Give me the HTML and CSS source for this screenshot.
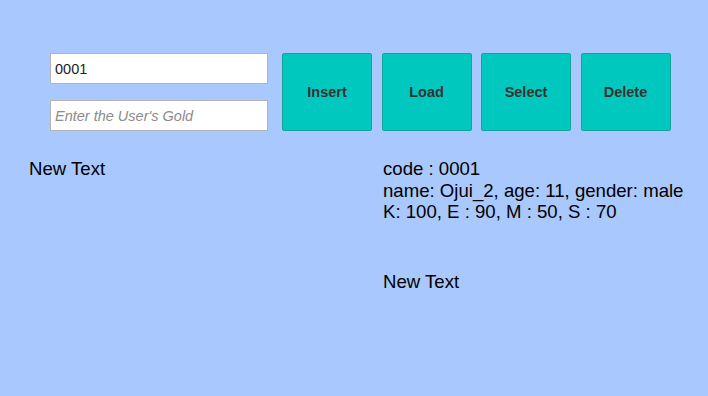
FILE: index.html
```html
<!DOCTYPE html>
<html lang="en">
<head>
  <meta charset="UTF-8" />
  <title>User DB</title>
  <link rel="stylesheet" href="styles.css">
</head>
<body>
  <div class="panel">
    <div class="controls">
      <div class="fields">
        <input type="text" class="field" value="0001">
        <input type="text" class="field" placeholder="Enter the User's Gold">
      </div>
      <div class="buttons">
        <button class="btn">Insert</button>
        <button class="btn">Load</button>
        <button class="btn">Select</button>
        <button class="btn">Delete</button>
      </div>
    </div>

    <div class="output">
      <div class="left-text">New Text</div>
      <div class="right-text">
        <div class="info">code : 0001<br>name: Ojui_2, age: 11, gender: male<br>K: 100, E : 90, M : 50, S : 70</div>
        <div class="status">New Text</div>
      </div>
    </div>
  </div>
</body>
</html>
```

FILE: styles.css
```css
html, body {
  margin: 0;
  height: 100%;
}
body {
  background: #a9c8fe;
  font-family: 'Liberation Sans', Arial, sans-serif;
  color: #000;
}
.panel {
  padding: 53px 0 0 0;
}
.controls {
  display: flex;
  padding-left: 50px;
}
.fields {
  display: flex;
  flex-direction: column;
  gap: 16px;
  width: 218px;
}
.field {
  box-sizing: border-box;
  height: 31px;
  width: 100%;
  margin: 0;
  padding: 0 4px;
  border: 1px solid #b4b4b4;
  background: #fff;
  font-family: 'Liberation Sans', Arial, sans-serif;
  font-size: 14.5px;
  color: #222;
  outline: none;
}
.field::placeholder {
  color: #8c8c8c;
  font-style: italic;
}
.buttons {
  display: flex;
  gap: 9.5px;
  margin-left: 14px;
}
.btn {
  box-sizing: border-box;
  width: 90px;
  height: 78px;
  background: #00c8be;
  border: 1px solid #13a49c;
  border-radius: 2px;
  font-family: 'Liberation Sans', Arial, sans-serif;
  font-weight: bold;
  font-size: 14.5px;
  color: #333;
  padding: 0;
}
.output {
  display: grid;
  grid-template-columns: 354px 1fr;
  padding-left: 29px;
  margin-top: 27px;
  font-size: 18.6px;
  line-height: 21.5px;
}
.status {
  margin-top: 48px;
}
```
